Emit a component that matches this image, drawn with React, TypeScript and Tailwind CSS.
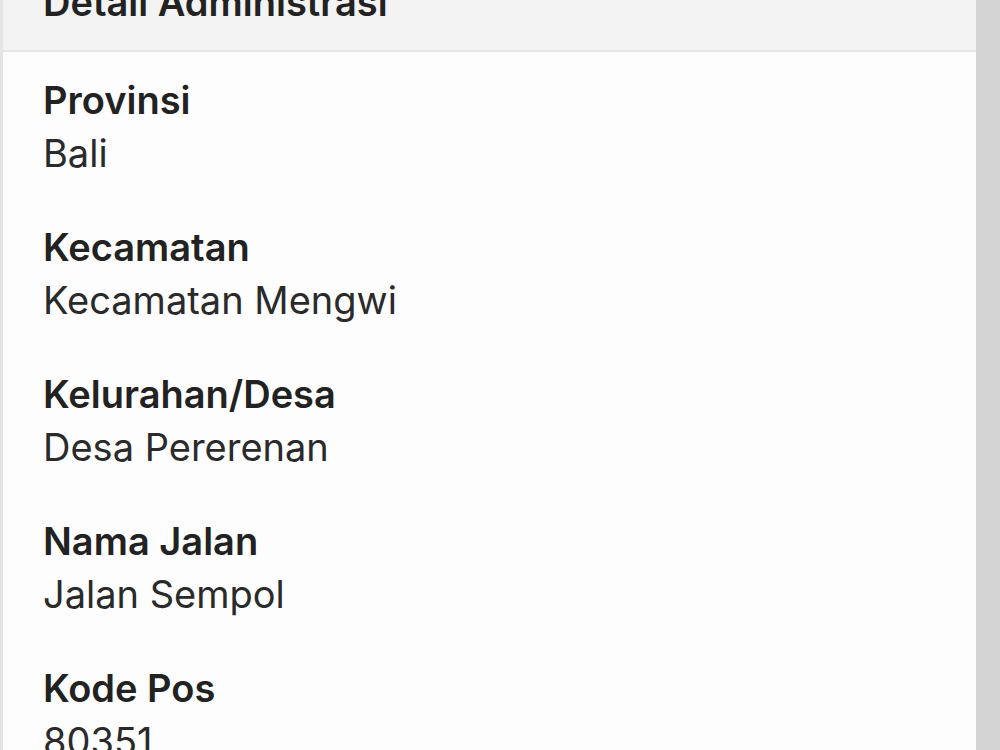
const ROWS = [
  { label: "Provinsi", value: "Bali" },
  { label: "Kecamatan", value: "Kecamatan Mengwi" },
  { label: "Kelurahan/Desa", value: "Desa Pererenan" },
  { label: "Nama Jalan", value: "Jalan Sempol" },
  { label: "Kode Pos", value: "80351" },
];

export default function App() {
  return (
    <div
      className="flex h-[750px] w-[1000px] overflow-hidden bg-[#d4d4d4]"
      style={{ fontFamily: "Inter, 'Noto Sans', sans-serif" }}
    >
      <div className="flex w-[976px] flex-col border-l-[3px] border-[#e4e4e4] bg-[#fdfdfd]">
        {/* header, scrolled half out of view */}
        <div className="h-[52px] shrink-0 overflow-hidden border-b-2 border-[#e6e6e6] bg-[#f3f3f3] pl-[40px]">
          <p className="-mt-[24px] text-[38px] font-semibold leading-[53px] text-[#222]">
            Detail Administrasi
          </p>
        </div>

        <div className="pl-[40px] pt-[22px]">
          {ROWS.map((row) => (
            <div key={row.label} className="mb-[41px]">
              <p className="text-[38px] font-semibold leading-[53px] text-[#222]">{row.label}</p>
              <p className="text-[38px] font-normal leading-[53px] text-[#2a2a2a]">{row.value}</p>
            </div>
          ))}
        </div>
      </div>
    </div>
  );
}
